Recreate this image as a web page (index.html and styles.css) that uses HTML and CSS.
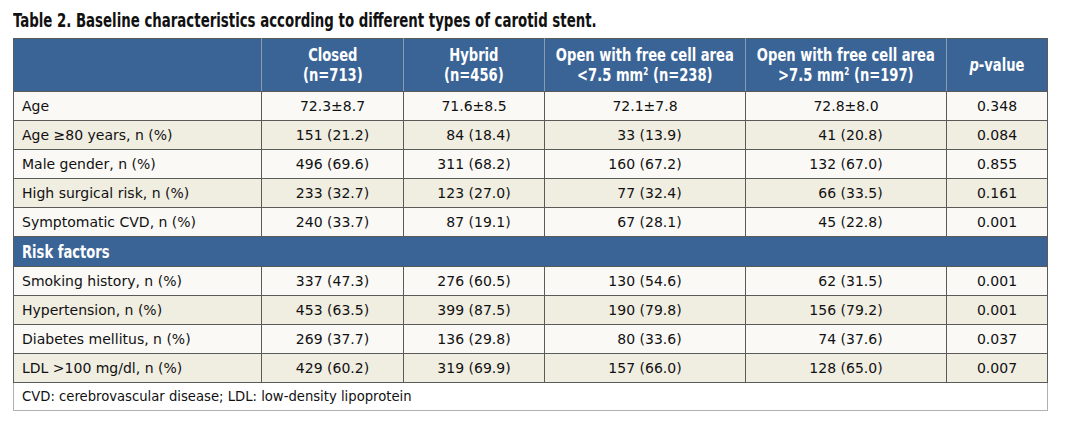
FILE: index.html
```html
<!DOCTYPE html>
<html>
<head>
<meta charset="utf-8">
<link rel="stylesheet" href="styles.css">
</head>
<body>
<div class="page">
  <h1 class="title"><span class="title-text">Table 2. Baseline characteristics according to different types of carotid stent.</span></h1>
  <table class="data">
    <colgroup>
      <col class="c1"><col class="c2"><col class="c3"><col class="c4"><col class="c5"><col class="c6">
    </colgroup>
    <thead>
      <tr class="head">
        <th></th>
        <th><div class="hc"><span class="sx">Closed<br>(n=713)</span></div></th>
        <th><div class="hc"><span class="sx">Hybrid<br>(n=456)</span></div></th>
        <th><div class="hc"><span class="sx">Open with free cell area<br>&lt;7.5 mm<sup>2</sup> (n=238)</span></div></th>
        <th><div class="hc"><span class="sx">Open with free cell area<br>&gt;7.5 mm<sup>2</sup> (n=197)</span></div></th>
        <th><div class="hc"><span class="sx"><i>p</i>-value</span></div></th>
      </tr>
    </thead>
    <tbody>
      <tr class="odd"><td>Age</td><td>72.3±8.7</td><td>71.6±8.5</td><td>72.1±7.8</td><td>72.8±8.0</td><td>0.348</td></tr>
      <tr class="even"><td>Age ≥80 years, n (%)</td><td>151 (21.2)</td><td>&#8199;84 (18.4)</td><td>&#8199;33 (13.9)</td><td>&#8199;41 (20.8)</td><td>0.084</td></tr>
      <tr class="odd"><td>Male gender, n (%)</td><td>496 (69.6)</td><td>311 (68.2)</td><td>160 (67.2)</td><td>132 (67.0)</td><td>0.855</td></tr>
      <tr class="even"><td>High surgical risk, n (%)</td><td>233 (32.7)</td><td>123 (27.0)</td><td>&#8199;77 (32.4)</td><td>&#8199;66 (33.5)</td><td>0.161</td></tr>
      <tr class="odd"><td>Symptomatic CVD, n (%)</td><td>240 (33.7)</td><td>&#8199;87 (19.1)</td><td>&#8199;67 (28.1)</td><td>&#8199;45 (22.8)</td><td>0.001</td></tr>
      <tr class="section"><td colspan="6"><span class="sec-text">Risk factors</span></td></tr>
      <tr class="odd"><td>Smoking history, n (%)</td><td>337 (47.3)</td><td>276 (60.5)</td><td>130 (54.6)</td><td>&#8199;62 (31.5)</td><td>0.001</td></tr>
      <tr class="even"><td>Hypertension, n (%)</td><td>453 (63.5)</td><td>399 (87.5)</td><td>190 (79.8)</td><td>156 (79.2)</td><td>0.001</td></tr>
      <tr class="odd"><td>Diabetes mellitus, n (%)</td><td>269 (37.7)</td><td>136 (29.8)</td><td>&#8199;80 (33.6)</td><td>&#8199;74 (37.6)</td><td>0.037</td></tr>
      <tr class="even"><td>LDL &gt;100 mg/dl, n (%)</td><td>429 (60.2)</td><td>319 (69.9)</td><td>157 (66.0)</td><td>128 (65.0)</td><td>0.007</td></tr>
      <tr class="foot"><td colspan="6">CVD: cerebrovascular disease; LDL: low-density lipoprotein</td></tr>
    </tbody>
  </table>
</div>
</body>
</html>
```
FILE: styles.css
```css
html, body {
  margin: 0;
  padding: 0;
  background: #ffffff;
}
.page {
  padding: 9px 0 0 13px;
}
.title {
  margin: 0 0 7px 0;
  font-family: "DejaVu Sans Condensed", "DejaVu Sans", sans-serif;
  font-weight: bold;
  font-size: 19px;
  line-height: 22px;
  color: #111;
  white-space: nowrap;
}
.title-text {
  display: inline-block;
  transform: scaleX(0.78);
  transform-origin: left center;
}
.data {
  border-collapse: collapse;
  width: 1034px;
  table-layout: fixed;
  font-family: "DejaVu Sans", sans-serif;
  font-size: 14px;
  color: #111;
}
.c1 { width: 248px; }
.c2 { width: 142px; }
.c3 { width: 141px; }
.c4 { width: 201px; }
.c5 { width: 201px; }
.c6 { width: 101px; }
.data td, .data th {
  border: 1px solid #5a5a5a;
  padding: 0 8px;
}
.head th {
  background: #3b6496;
  color: #ffffff;
  height: 52px;
  padding: 0;
  font-family: "DejaVu Sans Condensed", "DejaVu Sans", sans-serif;
  font-weight: bold;
  font-size: 18px;
  line-height: 20px;
  text-align: center;
  border-color: #8a9bb0;
  border-top-color: #5a5a5a;
  border-bottom-color: #5a5a5a;
}
.head th:first-child { border-left-color: #5a5a5a; }
.head th:last-child { border-right-color: #5a5a5a; }
.hc {
  display: flex;
  justify-content: center;
  align-items: center;
}
.sx {
  display: inline-block;
  white-space: nowrap;
  transform: scaleX(0.81);
  transform-origin: center center;
}
.head sup {
  font-size: 10px;
  line-height: 0;
  vertical-align: 6px;
}
tbody td {
  height: 28px;
  text-align: center;
  white-space: pre;
}
tbody td:first-child {
  text-align: left;
}
.odd td { background: #faf9f6; }
.even td { background: #f0ede1; }
.section td {
  background: #3b6496;
  color: #ffffff;
  font-family: "DejaVu Sans Condensed", "DejaVu Sans", sans-serif;
  font-weight: bold;
  font-size: 18px;
  height: 29px;
}
.sec-text {
  display: inline-block;
  transform: scaleX(0.81);
  transform-origin: left center;
}
.foot td {
  background: #ffffff;
  height: 27px;
  font-size: 13.2px;
  text-align: left;
  border-color: #b0b0b0;
  border-top-color: #5a5a5a;
}
```
